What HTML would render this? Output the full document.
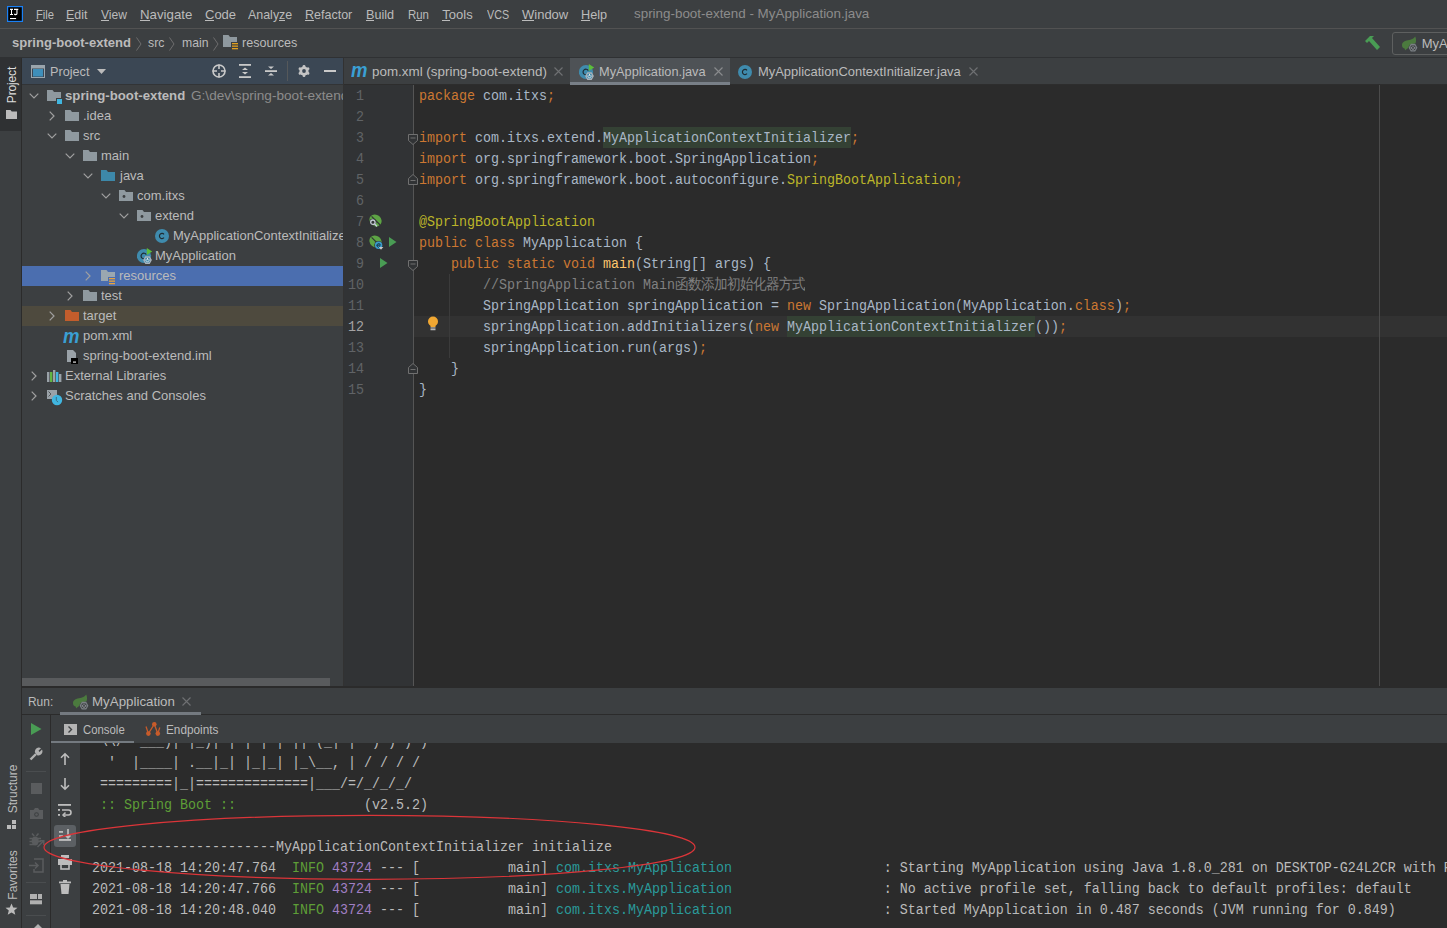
<!DOCTYPE html><html><head><meta charset="utf-8"><style>
*{margin:0;padding:0;box-sizing:border-box}
html,body{width:1447px;height:928px;overflow:hidden;background:#3c3f41}
div,svg{position:absolute}
span{position:static}
.ui{font-family:"Liberation Sans",sans-serif;font-size:13px;color:#bbbbbb;white-space:pre;}
.code{font-family:"Liberation Mono",monospace;font-size:13.333px;color:#a9b7c6;white-space:pre;transform:scaleY(1.1);transform-origin:0 14px}
</style></head><body><div style="left:0px;top:0px;width:1447px;height:28px;background:#3c3f41;"></div>
<div style="left:0px;top:28px;width:1447px;height:1px;background:#525252;"></div>
<div style="left:0px;top:29px;width:1447px;height:28px;background:#3c3f41;"></div>
<div style="left:0px;top:57px;width:1447px;height:1px;background:#2f3133;"></div>
<svg style="left:7px;top:6px;" width="16" height="16" viewBox="0 0 16 16"><rect x="0.6" y="0.6" width="14.8" height="14.8" fill="#000" stroke="#1a80f5" stroke-width="1.2"/><path d="M3 2.8h3v1.1H5v4.1h1v1.1H3V8h1V3.9H3z" fill="#fff"/><path d="M7 2.8h4.3v1.1h-0.8v3.6c0 1.2-0.8 1.7-1.8 1.7c-0.8 0-1.5-0.4-1.8-1l0.9-0.6c0.2 0.3 0.5 0.5 0.9 0.5c0.4 0 0.7-0.2 0.7-0.7V3.9H7z" fill="#fff"/><rect x="3" y="12" width="6.1" height="1.1" fill="#fff"/></svg>
<div class="ui" style="left:35.50px;top:5px;height:20px;line-height:20px;font-size:13px;color:#bbbbbb;transform:scale(0.8619,1.0);transform-origin:0 5px;">File</div>
<div style="left:36px;top:20px;width:7px;height:1px;background:#bbbbbb;"></div>
<div class="ui" style="left:66.00px;top:5px;height:20px;line-height:20px;font-size:13px;color:#bbbbbb;transform:scale(0.9565,1.0);transform-origin:0 5px;">Edit</div>
<div style="left:66px;top:20px;width:8px;height:1px;background:#bbbbbb;"></div>
<div class="ui" style="left:101.00px;top:5px;height:20px;line-height:20px;font-size:13px;color:#bbbbbb;transform:scale(0.9310,1.0);transform-origin:0 5px;">View</div>
<div style="left:101px;top:20px;width:8px;height:1px;background:#bbbbbb;"></div>
<div class="ui" style="left:140.00px;top:5px;height:20px;line-height:20px;font-size:13px;color:#bbbbbb;transform:scale(1.0196,1.0);transform-origin:0 5px;">Navigate</div>
<div style="left:140px;top:20px;width:10px;height:1px;background:#bbbbbb;"></div>
<div class="ui" style="left:205.00px;top:5px;height:20px;line-height:20px;font-size:13px;color:#bbbbbb;">Code</div>
<div style="left:205px;top:20px;width:9px;height:1px;background:#bbbbbb;"></div>
<div class="ui" style="left:248.00px;top:5px;height:20px;line-height:20px;font-size:13px;color:#bbbbbb;transform:scale(0.9565,1.0);transform-origin:0 5px;">Analyze</div>
<div style="left:279px;top:20px;width:6px;height:1px;background:#bbbbbb;"></div>
<div class="ui" style="left:305.30px;top:5px;height:20px;line-height:20px;font-size:13px;color:#bbbbbb;transform:scale(0.9620,1.0);transform-origin:0 5px;">Refactor</div>
<div style="left:305px;top:20px;width:9px;height:1px;background:#bbbbbb;"></div>
<div class="ui" style="left:366.40px;top:5px;height:20px;line-height:20px;font-size:13px;color:#bbbbbb;transform:scale(0.9724,1.0);transform-origin:0 5px;">Build</div>
<div style="left:366px;top:20px;width:8px;height:1px;background:#bbbbbb;"></div>
<div class="ui" style="left:407.50px;top:5px;height:20px;line-height:20px;font-size:13px;color:#bbbbbb;transform:scale(0.8792,1.0);transform-origin:0 5px;">Run</div>
<div style="left:416px;top:20px;width:6px;height:1px;background:#bbbbbb;"></div>
<div class="ui" style="left:442.30px;top:5px;height:20px;line-height:20px;font-size:13px;color:#bbbbbb;">Tools</div>
<div style="left:442px;top:20px;width:8px;height:1px;background:#bbbbbb;"></div>
<div class="ui" style="left:487.40px;top:5px;height:20px;line-height:20px;font-size:13px;color:#bbbbbb;transform:scale(0.8259,1.0);transform-origin:0 5px;">VCS</div>
<div class="ui" style="left:522.00px;top:5px;height:20px;line-height:20px;font-size:13px;color:#bbbbbb;">Window</div>
<div style="left:522px;top:20px;width:12px;height:1px;background:#bbbbbb;"></div>
<div class="ui" style="left:581.40px;top:5px;height:20px;line-height:20px;font-size:13px;color:#bbbbbb;transform:scale(0.9741,1.0);transform-origin:0 5px;">Help</div>
<div style="left:581px;top:20px;width:9px;height:1px;background:#bbbbbb;"></div>
<div class="ui" style="left:634.00px;top:4px;height:20px;line-height:20px;font-size:13px;color:#8c8c8c;transform:scale(1.0306,1.0);transform-origin:0 5px;">spring-boot-extend - MyApplication.java</div>
<div class="ui" style="left:12.40px;top:33px;height:20px;line-height:20px;font-size:13px;color:#bbbbbb;font-weight:bold;transform:scale(1.0051,1.05);transform-origin:0 5px;">spring-boot-extend</div>
<svg style="left:136px;top:37px;" width="6" height="14" viewBox="0 0 6 14"><path d="M0.5 0.5L5 7.0L0.5 13.5" fill="none" stroke="#6e6e6e" stroke-width="1"/></svg>
<div class="ui" style="left:148.00px;top:33px;height:20px;line-height:20px;font-size:13px;color:#bbbbbb;transform:scale(0.9444,1.05);transform-origin:0 5px;">src</div>
<svg style="left:169px;top:37px;" width="6" height="14" viewBox="0 0 6 14"><path d="M0.5 0.5L5 7.0L0.5 13.5" fill="none" stroke="#6e6e6e" stroke-width="1"/></svg>
<div class="ui" style="left:181.70px;top:33px;height:20px;line-height:20px;font-size:13px;color:#bbbbbb;transform:scale(0.9393,1.05);transform-origin:0 5px;">main</div>
<svg style="left:213px;top:37px;" width="6" height="14" viewBox="0 0 6 14"><path d="M0.5 0.5L5 7.0L0.5 13.5" fill="none" stroke="#6e6e6e" stroke-width="1"/></svg>
<svg style="left:222px;top:34px;" width="16" height="16" viewBox="0 0 16 16"><path d="M1 1h5.5l1.5 2H15v10H1z" fill="#8f999f"/><rect x="9" y="8" width="7" height="8" fill="#3c3f41"/><rect x="10" y="9" width="6" height="1.3" fill="#e0a020"/><rect x="10" y="11.5" width="6" height="1.3" fill="#e0a020"/><rect x="10" y="14" width="6" height="1.3" fill="#e0a020"/></svg>
<div class="ui" style="left:241.60px;top:33px;height:20px;line-height:20px;font-size:13px;color:#bbbbbb;transform:scale(0.9690,1.05);transform-origin:0 5px;">resources</div>
<svg style="left:1364px;top:35px;" width="17" height="16" viewBox="0 0 17 16"><path d="M1 6L6 1L10 1L8 3L16 12L13 15L5 6L3 8Z" fill="#499c54"/></svg>
<div style="left:1392px;top:32px;width:80px;height:23px;border:1px solid #5e6060;border-radius:3px"></div>
<svg style="left:1401px;top:36px;" width="17" height="17" viewBox="0 0 17 17"><path d="M1.2 10.5C0.2 6.8 3 4.6 7 4.2C10.3 3.9 12.8 2.8 14.2 0.6C15.3 3 15.3 5.2 14.6 7.2L9 8.5L6.6 12.5C5.5 13 4.5 13.8 4.2 14.6L3.6 12.6C2.4 12.2 1.5 11.5 1.2 10.5Z" fill="#4b7a3e"/><polygon points="7.60,11.70 9.80,7.80 14.20,7.80 16.40,11.70 14.20,15.60 9.80,15.60" fill="#7b8085"/><circle cx="12" cy="11.7" r="2.6" fill="#3c3f41"/><path d="M10.7 10.799999999999999A1.6 1.6 0 1 0 13.3 10.799999999999999" fill="none" stroke="#8c9196" stroke-width="1"/><path d="M12 9.399999999999999v2" stroke="#8c9196" stroke-width="1"/></svg>
<div class="ui" style="left:1421.70px;top:34px;height:20px;line-height:20px;font-size:13px;color:#bbbbbb;transform:scale(1.0000,1.05);transform-origin:0 5px;">MyApplication</div>
<div style="left:0px;top:58px;width:21px;height:870px;background:#3c3f41;"></div>
<div style="left:0px;top:58px;width:21px;height:73px;background:#2f3133;"></div>
<div style="left:21px;top:58px;width:1px;height:870px;background:#2b2b2b;"></div>
<div class="ui" style="left:-8px;top:78px;width:40px;height:14px;line-height:14px;font-size:12px;letter-spacing:-0.15px;color:#dddddd;transform:rotate(-90deg);transform-origin:50% 50%;text-align:center">Project</div>
<svg style="left:6px;top:110px;" width="11" height="9" viewBox="0 0 11 9"><path d="M0 0h4.5l1.2 1.6H11V9H0z" fill="#bbbbbb"/></svg>
<div class="ui" style="left:-12px;top:782px;width:50px;height:14px;line-height:14px;font-size:12px;color:#bbbbbb;transform:rotate(-90deg);transform-origin:50% 50%;text-align:center">Structure</div>
<svg style="left:7px;top:820px;" width="10" height="9" viewBox="0 0 10 9"><rect x="0" y="5" width="4" height="4" fill="#bbbbbb"/><rect x="5" y="5" width="4" height="4" fill="#bbbbbb"/><rect x="5" y="0" width="4" height="4" fill="#bbbbbb"/></svg>
<div class="ui" style="left:-12px;top:868px;width:50px;height:14px;line-height:14px;font-size:12px;color:#bbbbbb;transform:rotate(-90deg);transform-origin:50% 50%;text-align:center">Favorites</div>
<svg style="left:5px;top:903px;" width="13" height="13" viewBox="0 0 13 13"><path d="M6.5 0.5L8.2 4.6L12.5 4.8L9.2 7.6L10.3 11.8L6.5 9.5L2.7 11.8L3.8 7.6L0.5 4.8L4.8 4.6Z" fill="#bbbbbb"/></svg>
<div style="left:22px;top:58px;width:321px;height:628px;background:#3c3f41;"></div>
<div style="left:22px;top:58px;width:321px;height:26px;background:#3b4754;"></div>
<div style="left:22px;top:84px;width:321px;height:1px;background:#323436;"></div>
<div style="left:343px;top:58px;width:1px;height:630px;background:#323232;"></div>
<svg style="left:31px;top:65px;" width="14" height="13" viewBox="0 0 14 13"><rect x="0.5" y="0.5" width="13" height="12" fill="none" stroke="#9aa5ad"/><rect x="1" y="1" width="12" height="2.5" fill="#9aa5ad"/><rect x="2" y="4" width="10" height="7.5" fill="#3f8fba"/></svg>
<div class="ui" style="left:50.00px;top:62px;height:20px;line-height:20px;font-size:13px;color:#bbbbbb;transform:scale(0.9756,1.05);transform-origin:0 5px;">Project</div>
<svg style="left:97px;top:69px;" width="9" height="5" viewBox="0 0 9 5"><path d="M0 0h9L4.5 5z" fill="#bbbbbb"/></svg>
<svg style="left:212px;top:64px;" width="14" height="14" viewBox="0 0 14 14"><circle cx="7" cy="7" r="6" fill="none" stroke="#c9c9c9" stroke-width="1.6"/><path d="M7 0.5v4.5M7 9v4.5M0.5 7h4.5M9 7h4.5" stroke="#c9c9c9" stroke-width="1.6"/></svg>
<svg style="left:239px;top:64px;" width="12" height="14" viewBox="0 0 12 14"><rect x="0" y="0" width="12" height="1.8" fill="#c9c9c9"/><rect x="0" y="12.2" width="12" height="1.8" fill="#c9c9c9"/><path d="M3 6L6 3.5L9 6z M3 8L6 10.5L9 8z" fill="#c9c9c9"/></svg>
<svg style="left:265px;top:64px;" width="12" height="14" viewBox="0 0 12 14"><rect x="0" y="6.2" width="12" height="1.8" fill="#c9c9c9"/><path d="M3 2.5h6L6 5z M3 11.5h6L6 9z" fill="#c9c9c9"/></svg>
<div style="left:287px;top:61px;width:1px;height:20px;background:#55585a;"></div>
<svg style="left:297px;top:64px;" width="14" height="14" viewBox="0 0 14 14"><g fill="#c4c4c4"><circle cx="7" cy="7" r="4.6"/><rect x="5.6" y="1" width="2.8" height="12" rx="1.2"/><rect x="5.6" y="1" width="2.8" height="12" rx="1.2" transform="rotate(60 7 7)"/><rect x="5.6" y="1" width="2.8" height="12" rx="1.2" transform="rotate(120 7 7)"/></g><circle cx="7" cy="7" r="1.9" fill="#3b4754"/></svg>
<div style="left:324px;top:70px;width:12px;height:2px;background:#c9c9c9;"></div>
<div style="left:22px;top:266px;width:321px;height:20px;background:#4b6eaf;"></div>
<div style="left:22px;top:306px;width:321px;height:20px;background:#4e4a3e;"></div>
<div style="left:22px;top:0px;width:321px;height:686px;overflow:hidden">
<svg style="left:7px;top:93px;" width="10" height="6" viewBox="0 0 10 6"><path d="M0.7 0.7L5 5L9.3 0.7" fill="none" stroke="#a0a0a0" stroke-width="1.2"/></svg>
<svg style="left:24px;top:89px;" width="16" height="16" viewBox="0 0 16 16"><path d="M1 1h5.5l1.5 2H15v9H1z" fill="#8f999f"/><rect x="10" y="9" width="6" height="6" fill="#3c3f41"/><rect x="11" y="10" width="5" height="5" fill="#40b6e0"/></svg>
<div class="ui" style="left:43.00px;top:86px;height:20px;line-height:20px;font-size:13px;color:#bbbbbb;font-weight:bold;transform:scale(1.0153,1.05);transform-origin:0 5px;">spring-boot-extend</div>
<div class="ui" style="left:169.00px;top:86px;height:20px;line-height:20px;font-size:13px;color:#8c8c8c;transform:scale(1.0467,1.05);transform-origin:0 5px;">G:\dev\spring-boot-extend</div>
<svg style="left:27px;top:111px;" width="6" height="10" viewBox="0 0 6 10"><path d="M0.7 0.7L5 5L0.7 9.3" fill="none" stroke="#a0a0a0" stroke-width="1.2"/></svg>
<svg style="left:42px;top:109px;" width="16" height="14" viewBox="0 0 16 14"><path d="M1 1h5.5l1.5 2H15v9H1z" fill="#8f999f"/></svg>
<div class="ui" style="left:61.00px;top:106px;height:20px;line-height:20px;font-size:13px;color:#bbbbbb;transform:scale(1.0000,1.05);transform-origin:0 5px;">.idea</div>
<svg style="left:25px;top:133px;" width="10" height="6" viewBox="0 0 10 6"><path d="M0.7 0.7L5 5L9.3 0.7" fill="none" stroke="#a0a0a0" stroke-width="1.2"/></svg>
<svg style="left:42px;top:129px;" width="16" height="14" viewBox="0 0 16 14"><path d="M1 1h5.5l1.5 2H15v9H1z" fill="#8f999f"/></svg>
<div class="ui" style="left:61.00px;top:126px;height:20px;line-height:20px;font-size:13px;color:#bbbbbb;transform:scale(1.0000,1.05);transform-origin:0 5px;">src</div>
<svg style="left:43px;top:153px;" width="10" height="6" viewBox="0 0 10 6"><path d="M0.7 0.7L5 5L9.3 0.7" fill="none" stroke="#a0a0a0" stroke-width="1.2"/></svg>
<svg style="left:60px;top:149px;" width="16" height="14" viewBox="0 0 16 14"><path d="M1 1h5.5l1.5 2H15v9H1z" fill="#8f999f"/></svg>
<div class="ui" style="left:79.00px;top:146px;height:20px;line-height:20px;font-size:13px;color:#bbbbbb;transform:scale(1.0000,1.05);transform-origin:0 5px;">main</div>
<svg style="left:61px;top:173px;" width="10" height="6" viewBox="0 0 10 6"><path d="M0.7 0.7L5 5L9.3 0.7" fill="none" stroke="#a0a0a0" stroke-width="1.2"/></svg>
<svg style="left:78px;top:169px;" width="16" height="14" viewBox="0 0 16 14"><path d="M1 1h5.5l1.5 2H15v9H1z" fill="#3d88a9"/></svg>
<div class="ui" style="left:98.00px;top:166px;height:20px;line-height:20px;font-size:13px;color:#bbbbbb;transform:scale(1.0000,1.05);transform-origin:0 5px;">java</div>
<svg style="left:79px;top:193px;" width="10" height="6" viewBox="0 0 10 6"><path d="M0.7 0.7L5 5L9.3 0.7" fill="none" stroke="#a0a0a0" stroke-width="1.2"/></svg>
<svg style="left:96px;top:189px;" width="16" height="14" viewBox="0 0 16 14"><path d="M1 1h5.5l1.5 2H15v9H1z" fill="#8f999f"/><circle cx="6" cy="7.5" r="1.4" fill="#3c3f41"/></svg>
<div class="ui" style="left:115.00px;top:186px;height:20px;line-height:20px;font-size:13px;color:#bbbbbb;transform:scale(1.0000,1.05);transform-origin:0 5px;">com.itxs</div>
<svg style="left:97px;top:213px;" width="10" height="6" viewBox="0 0 10 6"><path d="M0.7 0.7L5 5L9.3 0.7" fill="none" stroke="#a0a0a0" stroke-width="1.2"/></svg>
<svg style="left:114px;top:209px;" width="16" height="14" viewBox="0 0 16 14"><path d="M1 1h5.5l1.5 2H15v9H1z" fill="#8f999f"/><circle cx="6" cy="7.5" r="1.4" fill="#3c3f41"/></svg>
<div class="ui" style="left:133.00px;top:206px;height:20px;line-height:20px;font-size:13px;color:#bbbbbb;transform:scale(1.0000,1.05);transform-origin:0 5px;">extend</div>
<svg style="left:132px;top:228px;" width="17" height="19" viewBox="0 0 17 19"><circle cx="8" cy="8" r="7" fill="#3f8bad"/><path d="M10 6.3A2.6 2.6 0 1 0 10 9.7" fill="none" stroke="#1f2b31" stroke-width="1.2"/></svg>
<div class="ui" style="left:151.00px;top:226px;height:20px;line-height:20px;font-size:13px;color:#bbbbbb;transform:scale(1.0000,1.05);transform-origin:0 5px;">MyApplicationContextInitializer</div>
<svg style="left:115px;top:246px;" width="17" height="19" viewBox="0 0 17 19"><circle cx="7" cy="10" r="7.1" fill="#3f8bad"/><path d="M9.3 8.6A2.8 2.8 0 1 0 9.3 11.4" fill="none" stroke="#1f2b31" stroke-width="1.2"/><path d="M9.8 1.9L15.2 5.4L9.8 8.9z" fill="#5cbd3c"/><polygon points="6.10,14.10 8.30,10.20 12.70,10.20 14.90,14.10 12.70,18.00 8.30,18.00" fill="#a9b2ba"/><circle cx="10.5" cy="14.1" r="2.6" fill="#3f8bad"/><path d="M9.2 13.2A1.6 1.6 0 1 0 11.8 13.2" fill="none" stroke="#dfe3e6" stroke-width="1"/><path d="M10.5 11.8v2" stroke="#dfe3e6" stroke-width="1"/></svg>
<div class="ui" style="left:133.00px;top:246px;height:20px;line-height:20px;font-size:13px;color:#bbbbbb;transform:scale(1.0000,1.05);transform-origin:0 5px;">MyApplication</div>
<svg style="left:63px;top:271px;" width="6" height="10" viewBox="0 0 6 10"><path d="M0.7 0.7L5 5L0.7 9.3" fill="none" stroke="#a0a0a0" stroke-width="1.2"/></svg>
<svg style="left:78px;top:269px;" width="16" height="16" viewBox="0 0 16 16"><path d="M1 1h5.5l1.5 2H15v9H1z" fill="#9aa7b0"/><rect x="8" y="8" width="8" height="8" fill="#4b6eaf"/><rect x="9" y="9" width="6" height="1.3" fill="#e8a33d"/><rect x="9" y="11.5" width="6" height="1.3" fill="#e8a33d"/><rect x="9" y="14" width="6" height="1.3" fill="#e8a33d"/></svg>
<div class="ui" style="left:97.00px;top:266px;height:20px;line-height:20px;font-size:13px;color:#bbbbbb;transform:scale(1.0000,1.05);transform-origin:0 5px;">resources</div>
<svg style="left:45px;top:291px;" width="6" height="10" viewBox="0 0 6 10"><path d="M0.7 0.7L5 5L0.7 9.3" fill="none" stroke="#a0a0a0" stroke-width="1.2"/></svg>
<svg style="left:60px;top:289px;" width="16" height="14" viewBox="0 0 16 14"><path d="M1 1h5.5l1.5 2H15v9H1z" fill="#8f999f"/></svg>
<div class="ui" style="left:79.00px;top:286px;height:20px;line-height:20px;font-size:13px;color:#bbbbbb;transform:scale(1.0000,1.05);transform-origin:0 5px;">test</div>
<svg style="left:27px;top:311px;" width="6" height="10" viewBox="0 0 6 10"><path d="M0.7 0.7L5 5L0.7 9.3" fill="none" stroke="#a0a0a0" stroke-width="1.2"/></svg>
<svg style="left:42px;top:309px;" width="16" height="14" viewBox="0 0 16 14"><path d="M1 1h5.5l1.5 2H15v9H1z" fill="#c35d2c"/></svg>
<div class="ui" style="left:61.00px;top:306px;height:20px;line-height:20px;font-size:13px;color:#bbbbbb;transform:scale(1.0000,1.05);transform-origin:0 5px;">target</div>
<svg style="left:41px;top:330px;" width="18" height="14" viewBox="0 0 18 14"><text x="0" y="13" font-family="Liberation Sans" font-weight="bold" font-style="italic" font-size="20" textLength="16.5" lengthAdjust="spacingAndGlyphs" fill="#3a9fd4">m</text></svg>
<div class="ui" style="left:61.00px;top:326px;height:20px;line-height:20px;font-size:13px;color:#bbbbbb;transform:scale(1.0000,1.05);transform-origin:0 5px;">pom.xml</div>
<svg style="left:42px;top:349px;" width="16" height="16" viewBox="0 0 16 16"><path d="M3 1h6l3 3v9H3z" fill="#9aa2a8"/><rect x="7" y="9" width="7" height="6" fill="#000"/><rect x="9" y="12.5" width="3" height="1.2" fill="#ddd"/></svg>
<div class="ui" style="left:61.00px;top:346px;height:20px;line-height:20px;font-size:13px;color:#bbbbbb;transform:scale(1.0000,1.05);transform-origin:0 5px;">spring-boot-extend.iml</div>
<svg style="left:9px;top:371px;" width="6" height="10" viewBox="0 0 6 10"><path d="M0.7 0.7L5 5L0.7 9.3" fill="none" stroke="#a0a0a0" stroke-width="1.2"/></svg>
<svg style="left:24px;top:369px;" width="16" height="16" viewBox="0 0 16 16"><rect x="1" y="3" width="2.4" height="10" fill="#9aa2a8"/><rect x="4" y="3" width="2.4" height="10" fill="#62b543"/><rect x="7" y="1" width="2.4" height="12" fill="#9aa2a8"/><rect x="10" y="3" width="2.4" height="10" fill="#40b6e0"/><rect x="13" y="5" width="2.4" height="8" fill="#9aa2a8"/></svg>
<div class="ui" style="left:43.00px;top:366px;height:20px;line-height:20px;font-size:13px;color:#bbbbbb;transform:scale(1.0000,1.05);transform-origin:0 5px;">External Libraries</div>
<svg style="left:9px;top:391px;" width="6" height="10" viewBox="0 0 6 10"><path d="M0.7 0.7L5 5L0.7 9.3" fill="none" stroke="#a0a0a0" stroke-width="1.2"/></svg>
<svg style="left:24px;top:389px;" width="18" height="18" viewBox="0 0 18 18"><rect x="1" y="1" width="10" height="9" fill="#9aa2a8"/><path d="M2.5 2.5L5 5L2.5 7.5" fill="none" stroke="#4a4d50" stroke-width="0.9"/><circle cx="11" cy="11" r="5.2" fill="#40b6e0"/><path d="M10.3 8v3.5l1.8 1.6" fill="none" stroke="#3a6f85" stroke-width="1"/></svg>
<div class="ui" style="left:43.00px;top:386px;height:20px;line-height:20px;font-size:13px;color:#bbbbbb;transform:scale(1.0000,1.05);transform-origin:0 5px;">Scratches and Consoles</div>
</div>
<div style="left:22px;top:678px;width:308px;height:8px;background:#595b5d;"></div>
<div style="left:344px;top:58px;width:1103px;height:26px;background:#3c3f41;"></div>
<div style="left:344px;top:84px;width:1103px;height:1px;background:#2d2d2d;"></div>
<div style="left:570px;top:58px;width:160px;height:24px;background:#4e5256;"></div>
<div style="left:570px;top:82px;width:160px;height:3px;background:#787f87;"></div>
<svg style="left:351px;top:64px;" width="18" height="14" viewBox="0 0 18 14"><text x="0" y="13" font-family="Liberation Sans" font-weight="bold" font-style="italic" font-size="20" textLength="16.5" lengthAdjust="spacingAndGlyphs" fill="#3a9fd4">m</text></svg>
<div class="ui" style="left:372.30px;top:62px;height:20px;line-height:20px;font-size:13px;color:#bbbbbb;transform:scale(1.0306,1.05);transform-origin:0 5px;">pom.xml (spring-boot-extend)</div>
<svg style="left:554px;top:67px;" width="9" height="9" viewBox="0 0 9 9"><path d="M0.5 0.5L8.5 8.5M8.5 0.5L0.5 8.5" stroke="#6f7173" stroke-width="1.1"/></svg>
<svg style="left:579px;top:62px;" width="17" height="19" viewBox="0 0 17 19"><circle cx="7" cy="10" r="7.1" fill="#3f8bad"/><path d="M9.3 8.6A2.8 2.8 0 1 0 9.3 11.4" fill="none" stroke="#1f2b31" stroke-width="1.2"/><path d="M9.8 1.9L15.2 5.4L9.8 8.9z" fill="#5cbd3c"/><polygon points="6.10,14.10 8.30,10.20 12.70,10.20 14.90,14.10 12.70,18.00 8.30,18.00" fill="#a9b2ba"/><circle cx="10.5" cy="14.1" r="2.6" fill="#3f8bad"/><path d="M9.2 13.2A1.6 1.6 0 1 0 11.8 13.2" fill="none" stroke="#dfe3e6" stroke-width="1"/><path d="M10.5 11.8v2" stroke="#dfe3e6" stroke-width="1"/></svg>
<div class="ui" style="left:598.80px;top:62px;height:20px;line-height:20px;font-size:13px;color:#bbbbbb;transform:scale(0.9835,1.05);transform-origin:0 5px;">MyApplication.java</div>
<svg style="left:714px;top:67px;" width="9" height="9" viewBox="0 0 9 9"><path d="M0.5 0.5L8.5 8.5M8.5 0.5L0.5 8.5" stroke="#8a8c8e" stroke-width="1.1"/></svg>
<svg style="left:737px;top:64px;" width="17" height="19" viewBox="0 0 17 19"><circle cx="8" cy="8" r="7" fill="#3f8bad"/><path d="M10 6.3A2.6 2.6 0 1 0 10 9.7" fill="none" stroke="#1f2b31" stroke-width="1.2"/></svg>
<div class="ui" style="left:757.70px;top:62px;height:20px;line-height:20px;font-size:13px;color:#bbbbbb;transform:scale(0.9951,1.05);transform-origin:0 5px;">MyApplicationContextInitializer.java</div>
<svg style="left:969px;top:67px;" width="9" height="9" viewBox="0 0 9 9"><path d="M0.5 0.5L8.5 8.5M8.5 0.5L0.5 8.5" stroke="#6f7173" stroke-width="1.1"/></svg>
<div style="left:344px;top:85px;width:1103px;height:601px;background:#2b2b2b;"></div>
<div style="left:344px;top:85px;width:69px;height:601px;background:#313335;"></div>
<div style="left:414px;top:316px;width:1033px;height:21px;background:#323232;"></div>
<div style="left:413px;top:85px;width:1px;height:601px;background:#555555;"></div>
<div style="left:1379px;top:85px;width:1px;height:601px;background:#4b4b4b;"></div>
<div style="left:603px;top:127px;width:248px;height:21px;background:#344134;"></div>
<div style="left:787px;top:316px;width:248px;height:21px;background:#344134;"></div>
<div style="left:449px;top:274px;width:1px;height:84px;background:#3b3b3b;"></div>
<div class="code" style="left:356px;top:86px;height:21px;line-height:21px;color:#606366;font-size:13.333px">1</div>
<div class="code" style="left:419px;top:86px;height:21px;line-height:21px"><span style="color:#cc7832;">package</span> com.itxs<span style="color:#cc7832;">;</span></div>
<div class="code" style="left:356px;top:107px;height:21px;line-height:21px;color:#606366;font-size:13.333px">2</div>
<div class="code" style="left:356px;top:128px;height:21px;line-height:21px;color:#606366;font-size:13.333px">3</div>
<div class="code" style="left:419px;top:128px;height:21px;line-height:21px"><span style="color:#cc7832;">import</span> com.itxs.extend.MyApplicationContextInitializer<span style="color:#cc7832;">;</span></div>
<div class="code" style="left:356px;top:149px;height:21px;line-height:21px;color:#606366;font-size:13.333px">4</div>
<div class="code" style="left:419px;top:149px;height:21px;line-height:21px"><span style="color:#cc7832;">import</span> org.springframework.boot.SpringApplication<span style="color:#cc7832;">;</span></div>
<div class="code" style="left:356px;top:170px;height:21px;line-height:21px;color:#606366;font-size:13.333px">5</div>
<div class="code" style="left:419px;top:170px;height:21px;line-height:21px"><span style="color:#cc7832;">import</span> org.springframework.boot.autoconfigure.<span style="color:#bbb529;">SpringBootApplication</span><span style="color:#cc7832;">;</span></div>
<div class="code" style="left:356px;top:191px;height:21px;line-height:21px;color:#606366;font-size:13.333px">6</div>
<div class="code" style="left:356px;top:212px;height:21px;line-height:21px;color:#606366;font-size:13.333px">7</div>
<div class="code" style="left:419px;top:212px;height:21px;line-height:21px"><span style="color:#bbb529;">@SpringBootApplication</span></div>
<div class="code" style="left:356px;top:233px;height:21px;line-height:21px;color:#606366;font-size:13.333px">8</div>
<div class="code" style="left:419px;top:233px;height:21px;line-height:21px"><span style="color:#cc7832;">public class </span>MyApplication {</div>
<div class="code" style="left:356px;top:254px;height:21px;line-height:21px;color:#606366;font-size:13.333px">9</div>
<div class="code" style="left:419px;top:254px;height:21px;line-height:21px"><span style="color:#cc7832;">    public static void </span><span style="color:#ffc66d;">main</span>(String[] args) {</div>
<div class="code" style="left:348px;top:275px;height:21px;line-height:21px;color:#606366;font-size:13.333px">10</div>
<div class="code" style="left:419px;top:275px;height:21px;line-height:21px"><span style="color:#808080;">        //SpringApplication Main函数添加初始化器方式</span></div>
<div class="code" style="left:348px;top:296px;height:21px;line-height:21px;color:#606366;font-size:13.333px">11</div>
<div class="code" style="left:419px;top:296px;height:21px;line-height:21px">        SpringApplication springApplication = <span style="color:#cc7832;">new </span>SpringApplication(MyApplication.<span style="color:#cc7832;">class</span>)<span style="color:#cc7832;">;</span></div>
<div class="code" style="left:348px;top:317px;height:21px;line-height:21px;color:#a4a3a3;font-size:13.333px">12</div>
<div class="code" style="left:419px;top:317px;height:21px;line-height:21px">        springApplication.addInitializers(<span style="color:#cc7832;">new </span>MyApplicationContextInitializer())<span style="color:#cc7832;">;</span></div>
<div class="code" style="left:348px;top:338px;height:21px;line-height:21px;color:#606366;font-size:13.333px">13</div>
<div class="code" style="left:419px;top:338px;height:21px;line-height:21px">        springApplication.run(args)<span style="color:#cc7832;">;</span></div>
<div class="code" style="left:348px;top:359px;height:21px;line-height:21px;color:#606366;font-size:13.333px">14</div>
<div class="code" style="left:419px;top:359px;height:21px;line-height:21px">    }</div>
<div class="code" style="left:348px;top:380px;height:21px;line-height:21px;color:#606366;font-size:13.333px">15</div>
<div class="code" style="left:419px;top:380px;height:21px;line-height:21px">}</div>
<svg style="left:369px;top:214px;" width="15" height="16" viewBox="0 0 15 16"><ellipse cx="6.5" cy="6.4" rx="6.4" ry="5.7" transform="rotate(40 6.5 6.4)" fill="#5da444"/><path d="M2.6 2.4L11.2 11" stroke="#313335" stroke-width="1.1"/><circle cx="3.9" cy="8.2" r="3.4" fill="#313335"/><circle cx="3.9" cy="8.2" r="2.2" fill="none" stroke="#c4ccd4" stroke-width="1.3"/><path d="M5.7 10.1L8 12.6" stroke="#c4ccd4" stroke-width="1.5"/></svg>
<svg style="left:369px;top:235px;" width="15" height="16" viewBox="0 0 15 16"><ellipse cx="6.5" cy="6.4" rx="6.4" ry="5.7" transform="rotate(40 6.5 6.4)" fill="#5da444"/><path d="M2.6 2.4L11.2 11" stroke="#313335" stroke-width="1.1"/><circle cx="9.6" cy="10.2" r="4.3" fill="#313335"/><circle cx="9.6" cy="10.2" r="3.7" fill="#3a9ccc"/><path d="M7.9 10.2h3.4A1.7 1.7 0 1 0 10.9 11.5" fill="none" stroke="#173a4c" stroke-width="1"/><path d="M9.8 12h4.6L12 14.8z" fill="#c8c8c8"/></svg>
<svg style="left:389px;top:237px;" width="8" height="10" viewBox="0 0 8 10"><path d="M0 0L7.5 5L0 10z" fill="#499c54"/></svg>
<svg style="left:380px;top:258px;" width="8" height="10" viewBox="0 0 8 10"><path d="M0 0L7.5 5L0 10z" fill="#499c54"/></svg>
<svg style="left:408px;top:134px;" width="11" height="11" viewBox="0 0 11 11"><path d="M0.5 0.5h9v6l-4.5 4l-4.5 -4z" fill="#313335" stroke="#707070"/><path d="M2.5 4h5" stroke="#707070"/></svg>
<svg style="left:408px;top:174px;" width="11" height="11" viewBox="0 0 11 11"><path d="M0.5 10.5h9v-6l-4.5 -4l-4.5 4z" fill="#313335" stroke="#707070"/><path d="M2.5 6.5h5" stroke="#707070"/></svg>
<svg style="left:408px;top:260px;" width="11" height="11" viewBox="0 0 11 11"><path d="M0.5 0.5h9v6l-4.5 4l-4.5 -4z" fill="#313335" stroke="#707070"/><path d="M2.5 4h5" stroke="#707070"/></svg>
<svg style="left:408px;top:363px;" width="11" height="11" viewBox="0 0 11 11"><path d="M0.5 10.5h9v-6l-4.5 -4l-4.5 4z" fill="#313335" stroke="#707070"/><path d="M2.5 6.5h5" stroke="#707070"/></svg>
<svg style="left:427px;top:316px;" width="12" height="15" viewBox="0 0 12 15"><circle cx="6" cy="5.5" r="5" fill="#f0a732"/><rect x="3.5" y="8" width="5" height="3" fill="#f0a732"/><rect x="3.5" y="11.5" width="5" height="1" fill="#d8d8d8"/><rect x="3.5" y="13.2" width="5" height="1" fill="#d8d8d8"/></svg>
<div style="left:22px;top:686px;width:1425px;height:2px;background:#2b2b2b;"></div>
<div style="left:22px;top:688px;width:1425px;height:26px;background:#3c3f41;"></div>
<div style="left:22px;top:714px;width:1425px;height:1px;background:#2b2b2b;"></div>
<div class="ui" style="left:28.20px;top:692px;height:20px;line-height:20px;font-size:13px;color:#bbbbbb;transform:scale(0.9185,1.05);transform-origin:0 5px;">Run:</div>
<svg style="left:72px;top:694px;" width="17" height="17" viewBox="0 0 17 17"><path d="M1.2 10.5C0.2 6.8 3 4.6 7 4.2C10.3 3.9 12.8 2.8 14.2 0.6C15.3 3 15.3 5.2 14.6 7.2L9 8.5L6.6 12.5C5.5 13 4.5 13.8 4.2 14.6L3.6 12.6C2.4 12.2 1.5 11.5 1.2 10.5Z" fill="#4b7a3e"/><polygon points="7.60,11.70 9.80,7.80 14.20,7.80 16.40,11.70 14.20,15.60 9.80,15.60" fill="#7b8085"/><circle cx="12" cy="11.7" r="2.6" fill="#3c3f41"/><path d="M10.7 10.799999999999999A1.6 1.6 0 1 0 13.3 10.799999999999999" fill="none" stroke="#8c9196" stroke-width="1"/><path d="M12 9.399999999999999v2" stroke="#8c9196" stroke-width="1"/></svg>
<div class="ui" style="left:92.00px;top:692px;height:20px;line-height:20px;font-size:13px;color:#bbbbbb;transform:scale(1.0247,1.05);transform-origin:0 5px;">MyApplication</div>
<svg style="left:182px;top:697px;" width="9" height="9" viewBox="0 0 9 9"><path d="M0.5 0.5L8.5 8.5M8.5 0.5L0.5 8.5" stroke="#6f7173" stroke-width="1.1"/></svg>
<div style="left:60px;top:712px;width:141px;height:3px;background:#747a80;"></div>
<div style="left:22px;top:715px;width:28px;height:213px;background:#3c3f41;"></div>
<div style="left:50px;top:715px;width:1px;height:213px;background:#2b2b2b;"></div>
<svg style="left:31px;top:723px;" width="11" height="12" viewBox="0 0 11 12"><path d="M0 0L10.5 6L0 12z" fill="#499c54"/></svg>
<svg style="left:29px;top:747px;" width="14" height="14" viewBox="0 0 14 14"><path d="M1.5 12.5L7 7" stroke="#b0b0b0" stroke-width="2.4"/><path d="M6 5.5A4 4 0 0 1 12 1.2L9.5 3.8L10.5 5L13 2.6A4 4 0 0 1 8.2 8.2z" fill="#b0b0b0"/></svg>
<div style="left:26px;top:771px;width:20px;height:1px;background:#4a4d4f;"></div>
<div style="left:31px;top:783px;width:11px;height:11px;background:#5a5c5e;"></div>
<svg style="left:29px;top:807px;" width="15" height="13" viewBox="0 0 15 13"><path d="M1 3h3.5l1.5-2h3l1.5 2H14v9H1z" fill="#5a5c5e"/><circle cx="7.5" cy="7.5" r="2.3" fill="#3c3f41"/><circle cx="7.5" cy="7.5" r="1.3" fill="#5a5c5e"/></svg>
<svg style="left:29px;top:832px;" width="16" height="16" viewBox="0 0 16 16"><g stroke="#5a5c5e" stroke-width="1.5" fill="none"><path d="M3 1.5L5.2 4M9.5 1.5L7.3 4M0.5 6.5H12M0.5 9.5H12M0.5 12.5H5"/><path d="M8.5 15L14.5 9M10.5 8.8H14.8V13"/></g><ellipse cx="6.2" cy="9" rx="3.6" ry="4.6" fill="#5a5c5e"/></svg>
<svg style="left:29px;top:858px;" width="15" height="15" viewBox="0 0 15 15"><path d="M5 1h9v13H5v-3" fill="none" stroke="#5a5c5e" stroke-width="1.5"/><path d="M0 7.5h9M6 4.5l3 3-3 3" fill="none" stroke="#5a5c5e" stroke-width="1.5"/></svg>
<div style="left:26px;top:882px;width:20px;height:1px;background:#4a4d4f;"></div>
<svg style="left:30px;top:894px;" width="13" height="11" viewBox="0 0 13 11"><rect x="0" y="0" width="7" height="5" fill="#b0b0b0"/><rect x="8" y="0" width="4" height="5" fill="#b0b0b0"/><rect x="0" y="6.3" width="12" height="4" fill="#b0b0b0"/></svg>
<div style="left:26px;top:915px;width:20px;height:1px;background:#4a4d4f;"></div>
<svg style="left:34px;top:924px;" width="8" height="4" viewBox="0 0 8 4"><path d="M0 4L4 0L8 4z" fill="#b0b0b0"/></svg>
<div style="left:51px;top:715px;width:1396px;height:28px;background:#3c3f41;"></div>
<div style="left:51px;top:741px;width:83px;height:2px;background:#747a80;"></div>
<svg style="left:64px;top:724px;" width="13" height="11" viewBox="0 0 13 11"><rect x="0" y="0" width="13" height="11" fill="#b4b4b4"/><path d="M4.5 2.5L7.5 5.5L4.5 8.5" fill="none" stroke="#3c3f41" stroke-width="1.4"/></svg>
<div class="ui" style="left:83.00px;top:720px;height:20px;line-height:20px;font-size:12px;color:#bbbbbb;transform:scale(0.9477,1.05);transform-origin:0 5px;">Console</div>
<svg style="left:144px;top:721px;" width="18" height="17" viewBox="0 0 18 17"><path d="M2 5.5L4.4 12.6L10.3 3.2L13.8 12.6L15.8 6.5" fill="none" stroke="#c75b2a" stroke-width="1.3"/><circle cx="10.3" cy="3.2" r="2.3" fill="#c75b2a"/><circle cx="4.4" cy="12.6" r="2.3" fill="#c75b2a"/><circle cx="13.8" cy="12.6" r="2.3" fill="#c75b2a"/></svg>
<div class="ui" style="left:165.50px;top:720px;height:20px;line-height:20px;font-size:12px;color:#bbbbbb;transform:scale(0.9811,1.05);transform-origin:0 5px;">Endpoints</div>
<div style="left:51px;top:743px;width:29px;height:185px;background:#3c3f41;"></div>
<div style="left:80px;top:743px;width:1367px;height:185px;background:#2b2b2b;"></div>
<svg style="left:60px;top:752px;" width="10" height="13" viewBox="0 0 10 13"><path d="M5 13V1.8M1 5.8L5 1.8L9 5.8" fill="none" stroke="#bdbdbd" stroke-width="1.6"/></svg>
<svg style="left:60px;top:778px;" width="10" height="13" viewBox="0 0 10 13"><path d="M5 0V11.2M1 7.2L5 11.2L9 7.2" fill="none" stroke="#bdbdbd" stroke-width="1.6"/></svg>
<svg style="left:58px;top:803px;" width="14" height="14" viewBox="0 0 14 14"><rect x="0" y="1" width="13" height="1.8" fill="#bdbdbd"/><rect x="0" y="6" width="2" height="1.8" fill="#bdbdbd"/><rect x="0" y="11" width="2" height="1.8" fill="#bdbdbd"/><path d="M4 7H10.5A2.5 2.5 0 0 1 10.5 12H6" fill="none" stroke="#bdbdbd" stroke-width="1.6"/><path d="M7.5 9.5L5 12L7.5 14.5" fill="none" stroke="#bdbdbd" stroke-width="1.5"/></svg>
<div style="left:54px;top:825px;width:22px;height:22px;background:#5c6064;border-radius:3px"></div>
<svg style="left:58px;top:829px;" width="14" height="14" viewBox="0 0 14 14"><rect x="1" y="2" width="4" height="1.8" fill="#bdbdbd"/><rect x="1" y="6.2" width="4" height="1.8" fill="#bdbdbd"/><rect x="1" y="10" width="12" height="1.9" fill="#bdbdbd"/><path d="M10 0V8.5M7.6 6.4L10 8.8L12.4 6.4" fill="none" stroke="#bdbdbd" stroke-width="1.7"/></svg>
<svg style="left:58px;top:855px;" width="14" height="15" viewBox="0 0 14 15"><rect x="3" y="0" width="8" height="3" fill="#bdbdbd"/><rect x="0" y="4" width="14" height="6" fill="#bdbdbd"/><rect x="3" y="9" width="8" height="5" fill="none" stroke="#bdbdbd" stroke-width="1.6"/></svg>
<svg style="left:59px;top:880px;" width="12" height="14" viewBox="0 0 12 14"><rect x="0" y="1.5" width="12" height="1.8" fill="#bdbdbd"/><rect x="4" y="0" width="4" height="2" fill="#bdbdbd"/><path d="M1.5 4h9l-1 10h-7z" fill="#bdbdbd"/></svg>
<div style="left:80px;top:743px;width:1367px;height:185px;overflow:hidden">
<div class="code" style="left:12px;top:-11px;height:21px;line-height:21px"><span style="color:#bbbbbb;"> \\/  ___)| |_)| | | | | || (_| |  ) ) ) )</span></div>
<div class="code" style="left:12px;top:10px;height:21px;line-height:21px"><span style="color:#bbbbbb;">  &#x27;  |____| .__|_| |_|_| |_\__, | / / / /</span></div>
<div class="code" style="left:12px;top:31px;height:21px;line-height:21px"><span style="color:#bbbbbb;"> =========|_|==============|___/=/_/_/_/</span></div>
<div class="code" style="left:12px;top:52px;height:21px;line-height:21px"><span style="color:#5e9e37;"> :: Spring Boot :: </span><span style="color:#bbbbbb;">               (v2.5.2)</span></div>
<div class="code" style="left:12px;top:94px;height:21px;line-height:21px"><span style="color:#bbbbbb;">-----------------------MyApplicationContextInitializer initialize</span></div>
<div class="code" style="left:12px;top:115px;height:21px;line-height:21px"><span style="color:#bbbbbb;">2021-08-18 14:20:47.764  </span><span style="color:#5e9e37;">INFO</span><span style="color:#bbbbbb;"> </span><span style="color:#a17fc4;">43724</span><span style="color:#bbbbbb;"> --- [           main] </span><span style="color:#2a9a9a;">com.itxs.MyApplication</span><span style="color:#bbbbbb;">                   : Starting MyApplication using Java 1.8.0_281 on DESKTOP-G24L2CR with PID 43724 (G:\dev\spring-boot-extend\target\classes started by itxs)</span></div>
<div class="code" style="left:12px;top:136px;height:21px;line-height:21px"><span style="color:#bbbbbb;">2021-08-18 14:20:47.766  </span><span style="color:#5e9e37;">INFO</span><span style="color:#bbbbbb;"> </span><span style="color:#a17fc4;">43724</span><span style="color:#bbbbbb;"> --- [           main] </span><span style="color:#2a9a9a;">com.itxs.MyApplication</span><span style="color:#bbbbbb;">                   : No active profile set, falling back to default profiles: default</span></div>
<div class="code" style="left:12px;top:157px;height:21px;line-height:21px"><span style="color:#bbbbbb;">2021-08-18 14:20:48.040  </span><span style="color:#5e9e37;">INFO</span><span style="color:#bbbbbb;"> </span><span style="color:#a17fc4;">43724</span><span style="color:#bbbbbb;"> --- [           main] </span><span style="color:#2a9a9a;">com.itxs.MyApplication</span><span style="color:#bbbbbb;">                   : Started MyApplication in 0.487 seconds (JVM running for 0.849)</span></div>
</div>
<svg style="left:0px;top:0px;pointer-events:none" width="1447" height="928" viewBox="0 0 1447 928"><ellipse cx="369.5" cy="847.3" rx="325.5" ry="32" fill="none" stroke="#dc3539" stroke-width="1.2"/></svg></body></html>
